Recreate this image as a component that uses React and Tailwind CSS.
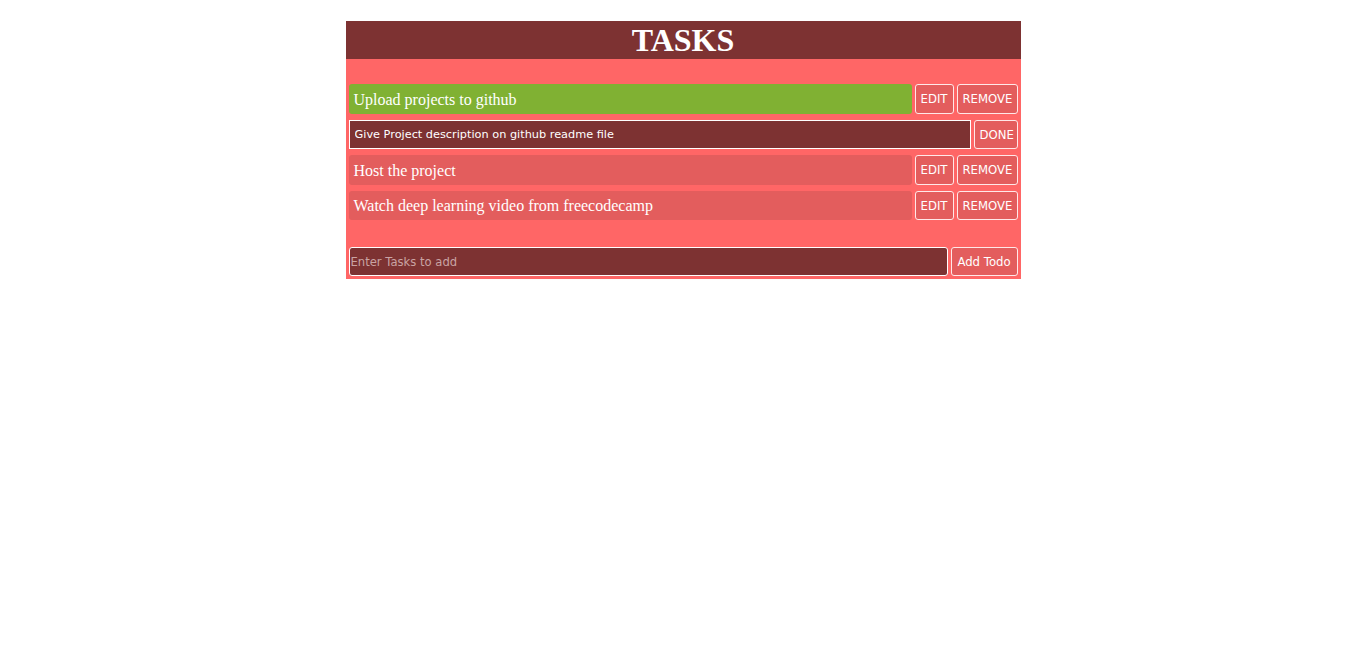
import React, { useState } from 'react'

const initialTodos = [
  { id: 1, text: 'Upload projects to github', done: true },
  { id: 2, text: 'Give Project description on github readme file', editing: true },
  { id: 3, text: 'Host the project' },
  { id: 4, text: 'Watch deep learning video from freecodecamp' },
]

const btn =
  'h-full px-[5px] pt-[3px] bg-[#e35d5d] border border-[#ffe8e8] rounded-[3px] text-white text-[11.7px] font-["DejaVu_Sans",sans-serif] leading-none'

const TodoRow = ({ todo }) => {
  if (todo.editing) {
    return (
      <div className="flex gap-[3px] h-[29.5px]">
        <input
          defaultValue={todo.text}
          className="flex-1 min-w-0 bg-[#7d3232] border border-white text-white text-[11.3px] px-[5px] pt-[3px] font-['DejaVu_Sans',sans-serif] outline-none"
        />
        <button className={`${btn} w-[44px]`}>DONE</button>
      </div>
    )
  }

  return (
    <div className="flex gap-[3px] h-[29.5px]">
      <div
        className={`flex-1 min-w-0 flex items-center rounded-[3px] pl-[5px] pt-[2px] text-white text-[16px] font-['Liberation_Serif',serif] ${
          todo.done ? 'bg-[#80b133]' : 'bg-[#e35d5d]'
        }`}
      >
        {todo.text}
      </div>
      <button className={`${btn} w-[39px]`}>EDIT</button>
      <button className={`${btn} w-[61px]`}>REMOVE</button>
    </div>
  )
}

const App = () => {
  const [todos] = useState(initialTodos)

  return (
    <div className="bg-white min-h-[654px] pt-[21px]">
      <div className="w-[675px] mx-auto bg-[#ff6666]">
        <h1 className="h-[38px] bg-[#7d3232] text-white text-center text-[32px] leading-[38px] font-bold font-['Liberation_Serif',serif]">
          TASKS
        </h1>
        <div className="px-[3px] pt-[25px] pb-[3px]">
          <div className="flex flex-col gap-[6px]">
            {todos.map((todo) => (
              <TodoRow key={todo.id} todo={todo} />
            ))}
          </div>
          <div className="flex gap-[3px] h-[29.5px] mt-[26.5px]">
            <input
              placeholder="Enter Tasks to add"
              className="flex-1 min-w-0 bg-[#7d3232] border border-white rounded-[3px] px-[1px] pt-[3px] text-white text-[11.6px] font-['DejaVu_Sans',sans-serif] placeholder:text-[#c9a3a3] outline-none"
            />
            <button className={`${btn} w-[67px]`}>Add Todo</button>
          </div>
        </div>
      </div>
    </div>
  )
}

export default App
